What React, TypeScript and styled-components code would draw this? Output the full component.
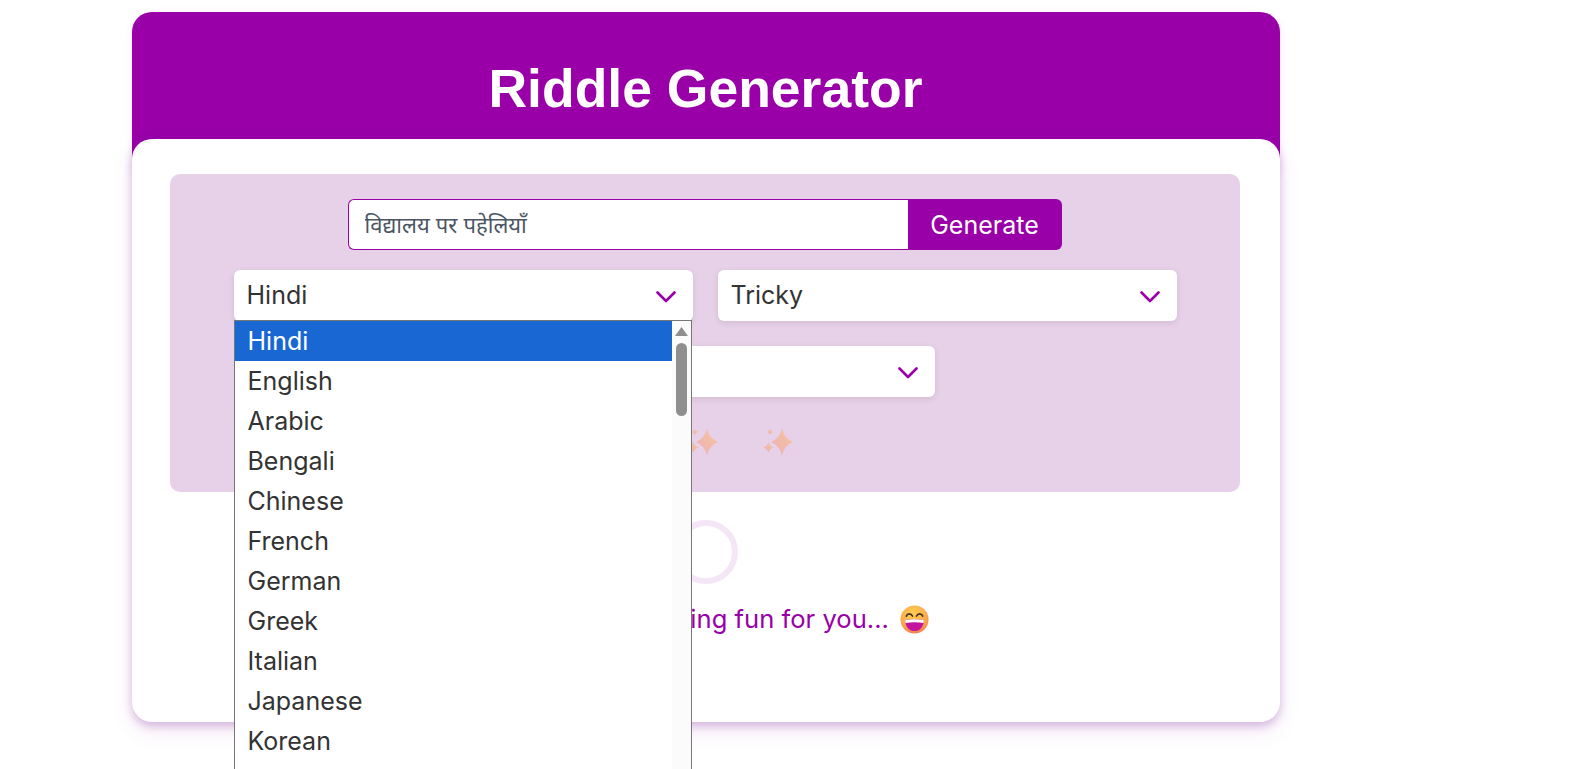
import styled, { createGlobalStyle } from "styled-components";

const purple = "#9900a8";

const GlobalStyle = createGlobalStyle`
html, body {
  margin: 0;
  height: 769px;
  overflow: hidden;
  background: #fff;
  font-family: "Inter", "Noto Sans", sans-serif;
}
* { box-sizing: border-box; }
`;

const Page = styled.div`
  width: 1148px;
  margin: 12px 0 0 131.5px;
`;

const Header = styled.header`
  height: 160px;
  padding-top: 47px;
  background: ${purple};
  border-radius: 20px 20px 0 0;
  box-shadow: 0 2px 8px rgba(153, 0, 168, 0.1);
`;

const Title = styled.h1`
  margin: 0;
  text-align: center;
  font: bold 53.5px/60px "Liberation Sans", Arial, sans-serif;
  color: #fff;
`;

const Card = styled.main`
  position: relative;
  height: 583px;
  margin-top: -33px;
  padding: 35px 40px 0 38px;
  background: #fff;
  border-radius: 20px;
  box-shadow: 0 4px 10px rgba(120, 20, 150, 0.28), 0 10px 24px rgba(153, 0, 168, 0.08);
`;

const Panel = styled.section`
  height: 318px;
  padding: 25px;
  background: #e7d1e9;
  border-radius: 10px;
`;

const SearchRow = styled.form`
  display: flex;
  width: 714px;
  height: 51px;
  margin: 0 auto 20px;
`;

const TopicInput = styled.input`
  flex: 1;
  min-width: 0;
  padding: 0 16px;
  border: 1px solid ${purple};
  border-right: 0;
  border-radius: 6px 0 0 6px;
  background: #fff;
  font: 22px "Inter", "Noto Sans Devanagari", "Noto Sans", sans-serif;
  outline: none;
  &::placeholder { color: #4b5563; opacity: 1; }
`;

const GenerateButton = styled.button`
  width: 154px;
  border: 0;
  border-radius: 0 6px 6px 0;
  background: ${purple};
  color: #fff;
  font: 25px "Inter", sans-serif;
`;

const Selects = styled.div`
  display: flex;
  flex-wrap: wrap;
  justify-content: center;
  gap: 25px;
  padding-left: 1px;
`;

const SelectBox = styled.div`
  position: relative;
  display: flex;
  align-items: center;
  justify-content: space-between;
  width: 459px;
  height: 51px;
  padding: 0 17px 2px 13px;
  background: #fff;
  border-radius: 6px;
  box-shadow: 0 2px 6px rgba(0, 0, 0, 0.1);
  font-size: 25px;
  color: #333;
`;

const ChevronIcon = styled.svg`
  margin-top: 4px;
`;

const Dropdown = styled.div`
  position: absolute;
  z-index: 5;
  top: 50px;
  left: 0;
  display: flex;
  width: 458px;
  height: 480px;
  background: #fff;
  border: 1px solid #767676;
`;

const OptionList = styled.div`
  flex: 1;
`;

const Option = styled.div<{ $active?: boolean }>`
  height: 40px;
  padding-left: 13px;
  line-height: 41px;
  font-size: 25px;
  color: ${(p) => (p.$active ? "#fff" : "#333")};
  background: ${(p) => (p.$active ? "#1967d2" : "transparent")};
`;

const ScrollTrack = styled.div`
  display: flex;
  flex-direction: column;
  align-items: center;
  width: 19px;
  padding-top: 6px;
  background: #fbfbfb;
`;

const ScrollThumb = styled.div`
  width: 11px;
  height: 73px;
  margin-top: 7px;
  border-radius: 6px;
  background: #8f8f8f;
`;

const Sparkles = styled.div`
  display: flex;
  justify-content: center;
  gap: 45px;
  margin-top: 30px;
  padding-right: 3px;
  opacity: 0.5;
`;

const Loader = styled.div`
  display: flex;
  flex-direction: column;
  align-items: center;
  padding-top: 28px;
`;

const Ring = styled.div`
  width: 64px;
  height: 64px;
  margin-left: 3px;
  border: 6px solid #f4e6f6;
  border-radius: 50%;
`;

const LoadingText = styled.p`
  display: flex;
  align-items: center;
  gap: 11px;
  margin: 19px 0 0;
  padding-left: 15px;
  font-size: 25.6px;
  line-height: 32px;
  color: ${purple};
`;

const Chevron = () => (
  <ChevronIcon width="20" height="12" viewBox="0 0 20 12" fill="none">
    <path d="M1.500 1.500 10 10l8.500-8.500" stroke={purple} strokeWidth="2.6" strokeLinecap="round" strokeLinejoin="round" />
  </ChevronIcon>
);

const Sparkle = ({ id }: { id: string }) => (
  <svg width="30" height="30" viewBox="0 0 30 30">
    <defs>
      <linearGradient id={id} x1="1" y1="0" x2="0" y2="1">
        <stop offset="0" stopColor="#ffc04d" />
        <stop offset="1" stopColor="#f98a8a" />
      </linearGradient>
    </defs>
    <path d="M19 1c1.500 7 4.500 11 11 14-6.500 3-9.500 7-11 14-1.500-7-4.500-11-11-14 6.500-3 9.500-7 11-14Z" fill={`url(#${id})`} />
    <path d="M7 1.500c.5 2 1.500 3 3.500 3.500-2 .5-3 1.500-3.500 3.500C6.500 6.500 5.500 5.500 3.500 5c2-.5 3-1.500 3.500-3.500Z" fill={`url(#${id})`} />
    <path d="M5.500 15c.8 3 2.500 4.700 5.500 5.500-3 .8-4.700 2.500-5.500 5.500-.8-3-2.500-4.700-5.500-5.500 3-.8 4.700-2.500 5.500-5.500Z" fill={`url(#${id})`} />
  </svg>
);

const Grin = () => (
  <svg width="29" height="29" viewBox="0 0 30 30">
    <defs>
      <radialGradient id="face" cx="0.45" cy="0.3" r="0.8">
        <stop offset="0" stopColor="#ffd04f" />
        <stop offset="0.6" stopColor="#fdaa4c" />
        <stop offset="1" stopColor="#f0704e" />
      </radialGradient>
    </defs>
    <circle cx="15" cy="15" r="14.500" fill="url(#face)" />
    <path d="M6.500 11.500c1.200-3 5-3 6.500 0M17 11.500c1.500-3 5.300-3 6.500 0" fill="none" stroke="#4a3328" strokeWidth="1.700" strokeLinecap="round" />
    <path d="M5.500 15.500c6-1 13-1 19 0 .5 6-3.500 11.500-9.500 11.500S5 21.500 5.500 15.500Z" fill="#c2149e" />
    <path d="M5.500 15.500c6-1 13-1 19 0 .1 1 .1 2-.1 3-6-1-12.800-1-18.800 0-.2-1-.2-2-.1-3Z" fill="#fff" />
  </svg>
);

const languages = ["English", "Arabic", "Bengali", "Chinese", "French", "German", "Greek", "Italian", "Japanese", "Korean"];

function App() {
  return (
    <Page>
      <GlobalStyle />
      <Header>
        <Title>Riddle Generator</Title>
      </Header>
      <Card>
        <Panel>
          <SearchRow>
            <TopicInput placeholder="विद्यालय पर पहेलियाँ" />
            <GenerateButton type="button">Generate</GenerateButton>
          </SearchRow>
          <Selects>
            <SelectBox>
              Hindi
              <Chevron />
              <Dropdown>
                <OptionList>
                  <Option $active>Hindi</Option>
                  {languages.map((l) => (
                    <Option key={l}>{l}</Option>
                  ))}
                </OptionList>
                <ScrollTrack>
                  <svg width="13" height="9" viewBox="0 0 13 9">
                    <path d="M6.500 0 13 9H0Z" fill="#8f8f8f" />
                  </svg>
                  <ScrollThumb />
                </ScrollTrack>
              </Dropdown>
            </SelectBox>
            <SelectBox>
              Tricky
              <Chevron />
            </SelectBox>
            <SelectBox>
              Medium
              <Chevron />
            </SelectBox>
          </Selects>
          <Sparkles>
            <Sparkle id="s1" />
            <Sparkle id="s2" />
            <Sparkle id="s3" />
          </Sparkles>
        </Panel>
        <Loader>
          <Ring />
          <LoadingText>
            Brewing something fun for you...
            <Grin />
          </LoadingText>
        </Loader>
      </Card>
    </Page>
  );
}

export default App;
